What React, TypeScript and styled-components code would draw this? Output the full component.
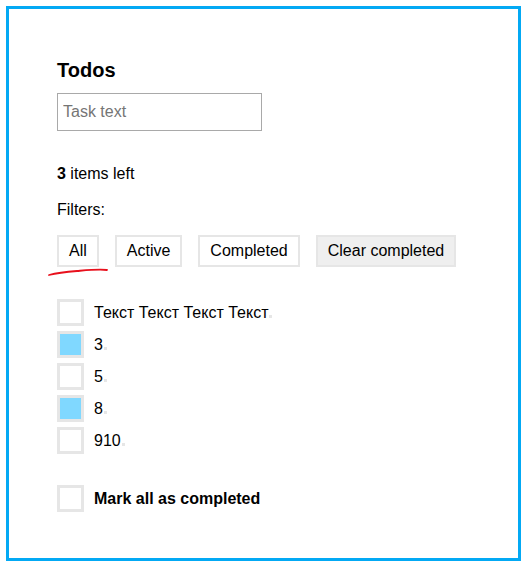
import styled, { createGlobalStyle } from "styled-components";

const GlobalStyle = createGlobalStyle`
  html, body {
    margin: 0;
    padding: 0;
    background: #fff;
  }
  body {
    font-family: "Liberation Sans", Arial, sans-serif;
    color: #000;
  }
`;

const Frame = styled.div`
  box-sizing: border-box;
  margin: 6px 7px 7px 6px;
  width: 515px;
  height: 555px;
  border: 3px solid #03a9f4;
  padding: 50px 48px 0;
`;

const Title = styled.h1`
  margin: 0;
  font-size: 20px;
  line-height: 23px;
  font-weight: 700;
`;

const TaskInput = styled.input`
  box-sizing: border-box;
  display: block;
  margin-top: 11px;
  width: 205px;
  height: 38px;
  border: 1px solid #a9a9a9;
  padding: 0 5px;
  font-family: inherit;
  font-size: 16px;
  outline: none;

  &::placeholder {
    color: #757575;
  }
`;

const Line = styled.p<{ $top: number }>`
  margin: ${(p) => p.$top}px 0 0;
  font-size: 16px;
  line-height: 18px;
`;

const FilterBar = styled.div`
  position: relative;
  display: flex;
  gap: 16px;
  margin-top: 16px;
`;

const FilterButton = styled.button<{ $muted?: boolean }>`
  box-sizing: border-box;
  height: 32px;
  padding: 0 10px;
  border: 2px solid #e6e6e6;
  background: ${(p) => (p.$muted ? "#efefef" : "#fff")};
  font-family: inherit;
  font-size: 16px;
  color: #000;
  cursor: pointer;
`;

const Scribble = styled.svg`
  position: absolute;
  left: -8px;
  top: 31px;
  overflow: visible;
`;

const List = styled.ul`
  list-style: none;
  margin: 32px 0 0;
  padding: 0;
  display: flex;
  flex-direction: column;
  gap: 5px;
`;

const Row = styled.li<{ $gapTop?: number }>`
  display: flex;
  align-items: center;
  gap: 10px;
  height: 27px;
  font-size: 16px;
  margin-top: ${(p) => p.$gapTop ?? 0}px;
`;

const Box = styled.span<{ $checked?: boolean }>`
  box-sizing: border-box;
  flex: none;
  width: 27px;
  height: 27px;
  border: 3px solid #e6e6e6;
  background: ${(p) => (p.$checked ? "#80d8ff" : "#fff")};
`;

const Label = styled.span<{ $bold?: boolean }>`
  display: inline-flex;
  align-items: baseline;
  font-weight: ${(p) => (p.$bold ? 700 : 400)};
`;

const Remove = styled.span`
  display: inline-block;
  width: 3px;
  height: 3px;
  margin-left: 1px;
  background: #e6e6e6;
`;

const todos = [
  { text: "Текст Текст Текст Текст", done: false },
  { text: "3", done: true },
  { text: "5", done: false },
  { text: "8", done: true },
  { text: "910", done: false },
];

export default function App() {
  return (
    <>
      <GlobalStyle />
      <Frame>
        <Title>Todos</Title>
        <TaskInput placeholder="Task text" />
        <Line $top={34}>
          <b>3</b> items left
        </Line>
        <Line $top={18}>Filters:</Line>
        <FilterBar>
          <FilterButton>All</FilterButton>
          <FilterButton>Active</FilterButton>
          <FilterButton>Completed</FilterButton>
          <FilterButton $muted>Clear completed</FilterButton>
          <Scribble width="60" height="10" viewBox="0 0 60 10">
            <path
              d="M0 9 C 8 7, 16 6, 28 5 S 50 3, 58 4"
              fill="none"
              stroke="#e8101c"
              strokeWidth="1.8"
              strokeLinecap="round"
            />
          </Scribble>
        </FilterBar>
        <List>
          {todos.map((t, i) => (
            <Row key={i}>
              <Box $checked={t.done} />
              <Label>
                {t.text}
                <Remove />
              </Label>
            </Row>
          ))}
          <Row $gapTop={26}>
            <Box />
            <Label $bold>Mark all as completed</Label>
          </Row>
        </List>
      </Frame>
    </>
  );
}
